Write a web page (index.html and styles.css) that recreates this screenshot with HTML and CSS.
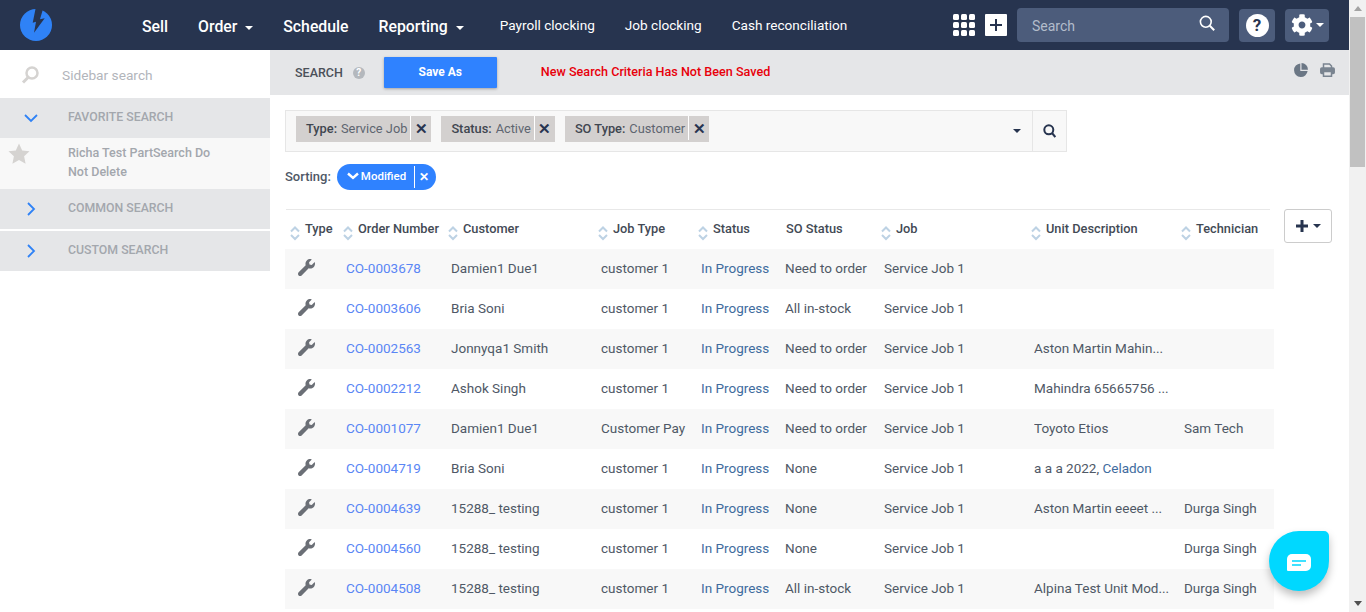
FILE: index.html
```html
<!DOCTYPE html>
<html>
<head>
<meta charset="utf-8">
<title>Service Jobs</title>
<link rel="stylesheet" href="styles.css">
</head>
<body>
<svg class="defs" width="0" height="0">
  <symbol id="wrench" viewBox="0 0 512 512"><path d="M507.73 109.1c-2.24-9.03-13.54-12.09-20.12-5.51l-74.36 74.36-67.88-11.31-11.31-67.88 74.36-74.36c6.62-6.62 3.43-17.9-5.66-20.16-47.38-11.74-99.55.91-136.58 37.93-39.64 39.64-50.55 97.1-34.05 147.2L18.74 402.76c-24.99 24.99-24.99 65.51 0 90.5 24.99 24.99 65.51 24.99 90.5 0l213.21-213.21c50.12 16.71 107.47 5.68 147.37-34.22 37.07-37.07 49.7-89.32 37.91-136.73z"/></symbol>
  <symbol id="sorter" viewBox="0 0 10 16"><path d="M1 6.500 5 2.500 9 6.500" fill="none" stroke="#bdd2e4" stroke-width="2"/><path d="M1 10 5 14 9 10" fill="none" stroke="#bdd2e4" stroke-width="2"/></symbol>
</svg>

<div class="page">
  <div class="app">
    <header class="topbar">
      <svg class="logo" viewBox="0 0 32 32"><circle cx="16" cy="16" r="16" fill="#2f82f6"/><path d="M15.700 -1 12.700 13.700 16 12.700 14 23.700 24.700 9.300 20 10.300 23.300 -1z" fill="#27344f"/></svg>
      <nav class="mainnav">
        <a class="big">Sell</a>
        <a class="big">Order <i class="caret"></i></a>
        <a class="big">Schedule</a>
        <a class="big lastbig">Reporting <i class="caret"></i></a>
        <a>Payroll clocking</a>
        <a>Job clocking</a>
        <a>Cash reconciliation</a>
      </nav>
      <div class="topright">
        <svg class="apps" viewBox="0 0 22 22" fill="#fff">
          <rect width="6" height="6" rx="1.500"/><rect x="8" width="6" height="6" rx="1.500"/><rect x="16" width="6" height="6" rx="1.500"/>
          <rect y="8" width="6" height="6" rx="1.500"/><rect x="8" y="8" width="6" height="6" rx="1.500"/><rect x="16" y="8" width="6" height="6" rx="1.500"/>
          <rect y="16" width="6" height="6" rx="1.500"/><rect x="8" y="16" width="6" height="6" rx="1.500"/><rect x="16" y="16" width="6" height="6" rx="1.500"/>
        </svg>
        <svg class="addbox" viewBox="0 0 22 22"><rect width="22" height="22" rx="1" fill="#fff"/><path d="M11 5v12M5 11h12" stroke="#27344f" stroke-width="2"/></svg>
        <div class="topsearch">
          <span>Search</span>
          <svg class="topsearchicon" width="16" height="16" viewBox="0 0 16 16" fill="none" stroke="#fff" stroke-width="1.600"><circle cx="6.800" cy="6.800" r="5.400"/><path d="m10.800 10.800 4.400 4.400" stroke-width="2"/></svg>
        </div>
        <div class="helpbtn"><span>?</span></div>
        <div class="gearbtn">
          <svg width="22" height="22" viewBox="0 0 512 512" fill="#fff"><path d="M487.4 315.7l-42.6-24.6c4.300-23.200 4.300-47 0-70.200l42.6-24.600c4.900-2.800 7.100-8.600 5.500-14-11.100-35.600-30-67.800-54.700-94.600-3.800-4.100-10-5.100-14.800-2.300L380.800 110c-17.900-15.400-38.500-27.300-60.800-35.100V25.800c0-5.600-3.900-10.500-9.400-11.700-36.700-8.200-74.300-7.800-109.200 0-5.500 1.200-9.400 6.100-9.400 11.700V75c-22.200 7.900-42.800 19.800-60.800 35.100L88.700 85.500c-4.900-2.800-11-1.900-14.800 2.300-24.700 26.700-43.600 58.900-54.700 94.600-1.700 5.400.6 11.200 5.500 14L67.300 221c-4.300 23.200-4.300 47 0 70.200l-42.6 24.600c-4.900 2.800-7.100 8.600-5.500 14 11.100 35.600 30 67.800 54.700 94.600 3.800 4.100 10 5.100 14.800 2.300l42.600-24.600c17.900 15.400 38.500 27.300 60.800 35.100v49.200c0 5.600 3.900 10.500 9.400 11.700 36.700 8.200 74.300 7.800 109.200 0 5.500-1.200 9.400-6.100 9.400-11.700v-49.200c22.200-7.900 42.800-19.800 60.800-35.100l42.600 24.600c4.900 2.800 11 1.900 14.800-2.300 24.700-26.700 43.600-58.900 54.700-94.600 1.500-5.500-.7-11.300-5.600-14.100zM256 336c-44.100 0-80-35.900-80-80s35.900-80 80-80 80 35.900 80 80-35.900 80-80 80z"/></svg>
          <i class="caret"></i>
        </div>
      </div>
    </header>

    <div class="body">
      <aside class="sidebar">
        <div class="sidesearch">
          <svg width="18" height="18" viewBox="0 0 18 18" fill="none"><circle cx="11" cy="7" r="5.500" stroke="#d5d3d1" stroke-width="2.500"/><path d="m7 11.500-5 5" stroke="#d5d3d1" stroke-width="3"/></svg>
          <span>Sidebar search</span>
        </div>
        <div class="sidehead">
          <svg width="14" height="14" viewBox="0 0 14 14" fill="none" stroke="#2f82f6" stroke-width="1.800"><path d="m1 4 6 6 6-6"/></svg>
          <span>FAVORITE SEARCH</span>
        </div>
        <div class="sideitem">
          <svg class="star" width="22" height="22" viewBox="0 0 22 22" fill="#d5d3d1"><path d="m11 .5 3.200 7 7.300.8-5.400 5 1.500 7.400-6.600-3.700-6.600 3.700 1.500-7.400-5.400-5 7.300-.8z"/></svg>
          <span>Richa Test PartSearch Do Not Delete</span>
        </div>
        <div class="sidehead">
          <svg width="14" height="14" viewBox="0 0 14 14" fill="none" stroke="#2f82f6" stroke-width="1.800"><path d="m4 1 6 6-6 6"/></svg>
          <span>COMMON SEARCH</span>
        </div>
        <div class="sidehead gap">
          <svg width="14" height="14" viewBox="0 0 14 14" fill="none" stroke="#2f82f6" stroke-width="1.800"><path d="m4 1 6 6-6 6"/></svg>
          <span>CUSTOM SEARCH</span>
        </div>
      </aside>

      <main class="content">
        <div class="subbar">
          <span class="subtitle">SEARCH</span>
          <span class="hint">?</span>
          <button class="saveas">Save As</button>
          <span class="unsaved">New Search Criteria Has Not Been Saved</span>
          <div class="subicons">
            <svg width="14" height="14" viewBox="0 0 14 14" fill="#6b7785"><path d="M6.300.4a6.800 6.800 0 1 0 7.300 7.600H6.300z"/><path d="M7.500 0v6.700h6.500A6.700 6.700 0 0 0 7.500 0z"/></svg>
            <svg width="15" height="14" viewBox="0 0 15 14" fill="none" stroke="#7a8490" stroke-width="1.500"><path d="M3.500 5V1h6l2 2v2"/><rect x=".8" y="5" width="13.400" height="5.500" rx="1" fill="#7a8490"/><path d="M3.500 8.500H11.500V13.200H3.500z" fill="#e5e6e8"/></svg>
          </div>
        </div>

        <div class="filterbox">
          <div class="tags">
            <span class="tag"><b>Type:</b> Service Job<i>✕</i></span>
            <span class="tag"><b>Status:</b> Active<i>✕</i></span>
            <span class="tag"><b>SO Type:</b> Customer<i>✕</i></span>
          </div>
          <i class="caret dark"></i>
          <div class="filtergo">
            <svg width="13" height="14" viewBox="0 0 13 14" fill="none" stroke="#27344f" stroke-width="2"><circle cx="5.800" cy="5.800" r="4.500"/><path d="m9 9 3.300 4"/></svg>
          </div>
        </div>

        <div class="sortrow">
          <span class="sortlabel">Sorting:</span>
          <span class="pill">
            <span class="pillname"><svg width="12" height="8" viewBox="0 0 12 8" fill="none" stroke="#fff" stroke-width="2.400"><path d="m1 1.500 5 4.500 5-4.500"/></svg>Modified</span>
            <span class="pillx">✕</span>
          </span>
        </div>

        <div class="tablewrap">
          <table class="jobs">
            <colgroup>
              <col class="c-type"><col class="c-order"><col class="c-wide"><col class="c-jobtype"><col class="c-status"><col class="c-so"><col class="c-wide"><col class="c-wide"><col class="c-tech">
            </colgroup>
            <thead>
              <tr>
                <th class="first"><svg class="sort"><use href="#sorter"/></svg>Type</th>
                <th><svg class="sort"><use href="#sorter"/></svg>Order Number</th>
                <th><svg class="sort"><use href="#sorter"/></svg>Customer</th>
                <th><svg class="sort"><use href="#sorter"/></svg>Job Type</th>
                <th><svg class="sort"><use href="#sorter"/></svg>Status</th>
                <th class="plain">SO Status</th>
                <th><svg class="sort"><use href="#sorter"/></svg>Job</th>
                <th><svg class="sort"><use href="#sorter"/></svg>Unit Description</th>
                <th><svg class="sort"><use href="#sorter"/></svg>Technician</th>
              </tr>
            </thead>
            <tbody>
              <tr><td><svg class="wr"><use href="#wrench"/></svg></td><td><a>CO-0003678</a></td><td>Damien1 Due1</td><td>customer 1</td><td class="st">In Progress</td><td>Need to order</td><td>Service Job 1</td><td></td><td></td></tr>
              <tr><td><svg class="wr"><use href="#wrench"/></svg></td><td><a>CO-0003606</a></td><td>Bria Soni</td><td>customer 1</td><td class="st">In Progress</td><td>All in-stock</td><td>Service Job 1</td><td></td><td></td></tr>
              <tr><td><svg class="wr"><use href="#wrench"/></svg></td><td><a>CO-0002563</a></td><td>Jonnyqa1 Smith</td><td>customer 1</td><td class="st">In Progress</td><td>Need to order</td><td>Service Job 1</td><td>Aston Martin Mahin...</td><td></td></tr>
              <tr><td><svg class="wr"><use href="#wrench"/></svg></td><td><a>CO-0002212</a></td><td>Ashok Singh</td><td>customer 1</td><td class="st">In Progress</td><td>Need to order</td><td>Service Job 1</td><td>Mahindra 65665756 ...</td><td></td></tr>
              <tr><td><svg class="wr"><use href="#wrench"/></svg></td><td><a>CO-0001077</a></td><td>Damien1 Due1</td><td>Customer Pay</td><td class="st">In Progress</td><td>Need to order</td><td>Service Job 1</td><td>Toyoto Etios</td><td>Sam Tech</td></tr>
              <tr><td><svg class="wr"><use href="#wrench"/></svg></td><td><a>CO-0004719</a></td><td>Bria Soni</td><td>customer 1</td><td class="st">In Progress</td><td>None</td><td>Service Job 1</td><td>a a a 2022, <span class="st">Celadon</span></td><td></td></tr>
              <tr><td><svg class="wr"><use href="#wrench"/></svg></td><td><a>CO-0004639</a></td><td>15288_ testing</td><td>customer 1</td><td class="st">In Progress</td><td>None</td><td>Service Job 1</td><td>Aston Martin eeeet ...</td><td>Durga Singh</td></tr>
              <tr><td><svg class="wr"><use href="#wrench"/></svg></td><td><a>CO-0004560</a></td><td>15288_ testing</td><td>customer 1</td><td class="st">In Progress</td><td>None</td><td>Service Job 1</td><td></td><td>Durga Singh</td></tr>
              <tr><td><svg class="wr"><use href="#wrench"/></svg></td><td><a>CO-0004508</a></td><td>15288_ testing</td><td>customer 1</td><td class="st">In Progress</td><td>All in-stock</td><td>Service Job 1</td><td>Alpina Test Unit Mod...</td><td>Durga Singh</td></tr>
            </tbody>
          </table>
          <div class="addcol">
            <svg width="12" height="12" viewBox="0 0 12 12" fill="#27344f"><path d="M4.500 0h3v4.500H12v3H7.500V12h-3V7.500H0v-3h4.500z"/></svg>
            <i class="caret dark"></i>
          </div>
        </div>
      </main>
    </div>
  </div>

  <div class="scrollbar">
    <span class="arrow up"></span>
    <span class="thumb"></span>
    <span class="arrow down"></span>
  </div>
</div>

<div class="chat">
  <svg width="24" height="17" viewBox="0 0 24 17"><path d="M5 0h14a5 5 0 0 1 5 5v7a5 5 0 0 1-5 5H1a1 1 0 0 1-1-1V5a5 5 0 0 1 5-5z" fill="#fff"/><path d="M5 7h14M5 11h9" stroke="#00d8ff" stroke-width="1.500"/></svg>
</div>
</body>
</html>
```

FILE: styles.css
```css
html, body {
   margin: 0;
   height: 100%;
   overflow: hidden;
}

body {
   font-family: Roboto, "Liberation Sans", sans-serif;
   font-size: 13.5px;
   color: #4f5866;
   background-color: white;
}

.defs {
   position: absolute;
}

.page {
   display: flex;
   height: 612px;
}

.app {
   flex: 1;
   min-width: 0;
}

/* top bar */
.topbar {
   display: flex;
   align-items: center;
   height: 50px;
   padding-left: 20px;
   background-color: #27344f;
   color: white;
}

.logo {
   width: 32px;
   height: 32px;
   margin: 0 90px 0 0;
}

.mainnav {
   display: flex;
   align-items: center;
   gap: 30px;
   font-size: 13.6px;
   white-space: nowrap;
}

.mainnav .big {
   font-size: 15.8px;
   font-weight: 500;
   margin-top: 3px;
}

.mainnav .lastbig {
   margin-right: 6px;
}

.caret {
   display: inline-block;
   width: 0;
   height: 0;
   margin-left: 4px;
   vertical-align: middle;
   border-top: 4px solid white;
   border-left: 4px solid transparent;
   border-right: 4px solid transparent;
}

.caret.dark {
   border-top-color: #27344f;
}

.topright {
   display: flex;
   align-items: center;
   margin-left: auto;
   padding-right: 20px;
}

.apps, .addbox {
   width: 22px;
   height: 22px;
   margin-right: 10px;
}

.topsearch {
   display: flex;
   align-items: center;
   justify-content: space-between;
   box-sizing: border-box;
   width: 212px;
   height: 34px;
   padding: 2px 14px 0 15px;
   margin-right: 10px;
   border-radius: 4px;
   background-color: #4c5c7b;
   font-size: 14px;
   color: #b3bccb;
}

.topsearchicon {
   margin-top: -6px;
}

.helpbtn, .gearbtn {
   display: flex;
   align-items: center;
   justify-content: center;
   height: 33px;
   border-radius: 4px;
   background-color: #4c5c7b;
}

.helpbtn {
   width: 36px;
   margin-right: 10px;
}

.helpbtn span {
   width: 23px;
   height: 23px;
   border-radius: 50%;
   background-color: white;
   color: #27344f;
   font-size: 17px;
   font-weight: 700;
   line-height: 23px;
   text-align: center;
}

.gearbtn {
   width: 44px;
}

.gearbtn .caret {
   margin-left: 3px;
}

/* sidebar */
.body {
   display: flex;
}

.sidebar {
   flex: none;
   width: 270px;
   font-size: 12.3px;
   font-weight: 500;
   color: #a3a7ad;
}

.sidesearch {
   display: flex;
   align-items: center;
   height: 48px;
   padding: 2px 0 0 21px;
   box-sizing: border-box;
   gap: 23px;
   font-size: 13.7px;
   font-weight: 400;
   color: #b2b5bb;
}

.sidehead {
   display: flex;
   align-items: center;
   height: 40px;
   padding: 0 0 2px 24px;
   box-sizing: border-box;
   gap: 30px;
   background-color: #e5e6e8;
}

.sidehead svg {
   margin-top: 2px;
}

.sidehead.gap {
   margin-top: 2px;
}

.sideitem {
   display: flex;
   gap: 38px;
   box-sizing: border-box;
   height: 51px;
   padding: 5px 50px 0 8px;
   font-size: 12.5px;
   line-height: 19px;
   background-color: #f8f8f8;
}

.star {
   flex: none;
}

/* search bar */
.content {
   flex: 1;
   min-width: 0;
}

.subbar {
   display: flex;
   align-items: center;
   height: 45px;
   padding-left: 25px;
   background-color: #e5e6e8;
   font-size: 12.5px;
}

.subtitle {
   font-weight: 500;
   color: #4b5058;
}

.hint {
   width: 12px;
   height: 12px;
   margin-left: 10px;
   border-radius: 50%;
   background-color: #b4b8bd;
   color: white;
   font-size: 10px;
   font-weight: 700;
   line-height: 12px;
   text-align: center;
}

.saveas {
   width: 113px;
   height: 31px;
   margin: 0 0 1px 19px;
   border: 0;
   border-radius: 1px;
   background-color: #2f82ff;
   box-shadow: 0 1px 3px rgba(0, 0, 0, 0.3);
   color: white;
   font-family: inherit;
   font-size: 12px;
   font-weight: 700;
}

.unsaved {
   margin: 0 0 2px 44px;
   font-size: 12.6px;
   color: #e8000b;
   font-weight: 500;
}

.subicons {
   display: flex;
   gap: 12px;
   align-items: center;
   margin: -5px 14px 0 auto;
}

/* filter box */
.filterbox {
   display: flex;
   align-items: center;
   box-sizing: border-box;
   width: 782px;
   height: 42px;
   margin: 15px 0 0 15px;
   padding-left: 10px;
   border: 1px solid #e6e6e6;
   background-color: #f8f8f8;
}

.tags {
   display: flex;
   flex: 1;
   gap: 10px;
   margin-bottom: 4px;
}

.tag {
   display: flex;
   align-items: center;
   box-sizing: border-box;
   height: 26px;
   padding: 0 0 2px 10px;
   background-color: #d3d0cf;
   font-size: 12.8px;
   color: #5e6570;
   white-space: nowrap;
}

.tag b {
   margin-right: 4px;
   font-weight: 500;
   color: #3f4650;
}

.tag i {
   width: 20px;
   height: 24px;
   margin-left: 3px;
   border-left: 1px solid white;
   color: #27344f;
   font-style: normal;
   font-size: 15px;
   font-weight: 700;
   line-height: 26px;
   text-align: center;
}

.filtergo {
   display: flex;
   align-items: center;
   justify-content: center;
   width: 33px;
   height: 100%;
   margin-left: 11px;
   border-left: 1px solid #e6e6e6;
}

/* sorting */
.sortrow {
   display: flex;
   align-items: center;
   gap: 6px;
   margin: 12px 0 0 15px;
   font-size: 13px;
   font-weight: 500;
}

.sortlabel {
   margin-bottom: 2px;
}

.pill {
   display: flex;
   align-items: center;
   height: 26px;
   padding-left: 10px;
   border-radius: 13px;
   background-color: #2f82ff;
   color: white;
   font-size: 11.500px;
}

.pillname {
   display: flex;
   align-items: center;
   gap: 2px;
   padding-right: 8px;
   margin-bottom: 2px;
}

.pillx {
   width: 18px;
   height: 22px;
   padding-right: 3px;
   border-left: 1px solid white;
   font-size: 12px;
   font-weight: 700;
   line-height: 22px;
   text-align: center;
}

/* table */
.tablewrap {
   display: flex;
   align-items: flex-start;
   margin: 19px 0 0 15px;
}

.jobs {
   flex: none;
   width: 989px;
   table-layout: fixed;
   border-collapse: collapse;
}

.c-type { width: 61px; }
.c-order { width: 105px; }
.c-wide { width: 150px; }
.c-jobtype { width: 100px; }
.c-status { width: 84px; }
.c-so { width: 99px; }
.c-tech { width: 90px; }

.jobs thead tr {
   background: linear-gradient(#e8e8e8, #e8e8e8) 1px 0 / 984px 1px no-repeat;
}

.jobs th {
   height: 40px;
   padding: 12px 0 0 0;
   box-sizing: border-box;
   font-size: 12.8px;
   font-weight: 500;
   color: #434a55;
   text-align: left;
   vertical-align: top;
   white-space: nowrap;
}

.jobs th.first {
   padding-left: 5px;
}

.jobs th.plain {
   padding-left: 1px;
}

.sort {
   width: 10px;
   height: 16px;
   margin: 0 5px 0 -3px;
   vertical-align: -8px;
}

.jobs th.first .sort {
   margin-left: 0;
}

.jobs td {
   box-sizing: border-box;
   height: 40px;
   padding: 0 0 2px 0;
   white-space: nowrap;
   overflow: hidden;
}

.jobs tbody tr:nth-child(odd) {
   background-color: #f8f8f8;
}

.wr {
   display: block;
   width: 17px;
   height: 17px;
   margin: 0 0 1px 13px;
   fill: #6b6f76;
}

.jobs a {
   color: #5a86f5;
}

.st {
   color: #3f6c9e;
}

.addcol {
   display: flex;
   align-items: center;
   justify-content: center;
   gap: 1px;
   box-sizing: border-box;
   width: 48px;
   height: 34px;
   margin-left: 10px;
   border: 1px solid #ccc;
   border-radius: 3px;
}

/* scrollbar */
.scrollbar {
   display: flex;
   flex: none;
   flex-direction: column;
   align-items: center;
   width: 17px;
   background-color: #f1f1f1;
}

.arrow {
   width: 0;
   height: 0;
   margin: 6px 0;
   border-left: 4px solid transparent;
   border-right: 4px solid transparent;
}

.arrow.up {
   border-bottom: 5px solid #a3a3a3;
}

.arrow.down {
   margin-top: auto;
   border-top: 5px solid #505050;
}

.thumb {
   width: 15px;
   height: 150px;
   background-color: #c1c1c1;
}

/* chat bubble */
.chat {
   position: fixed;
   top: 531px;
   left: 1269px;
   display: flex;
   align-items: center;
   justify-content: center;
   width: 60px;
   height: 60px;
   padding-top: 3px;
   box-sizing: border-box;
   border-radius: 50% 5px 50% 50%;
   background-color: #00d8ff;
   box-shadow: 0 5px 8px rgba(0, 0, 0, 0.25);
}
```
